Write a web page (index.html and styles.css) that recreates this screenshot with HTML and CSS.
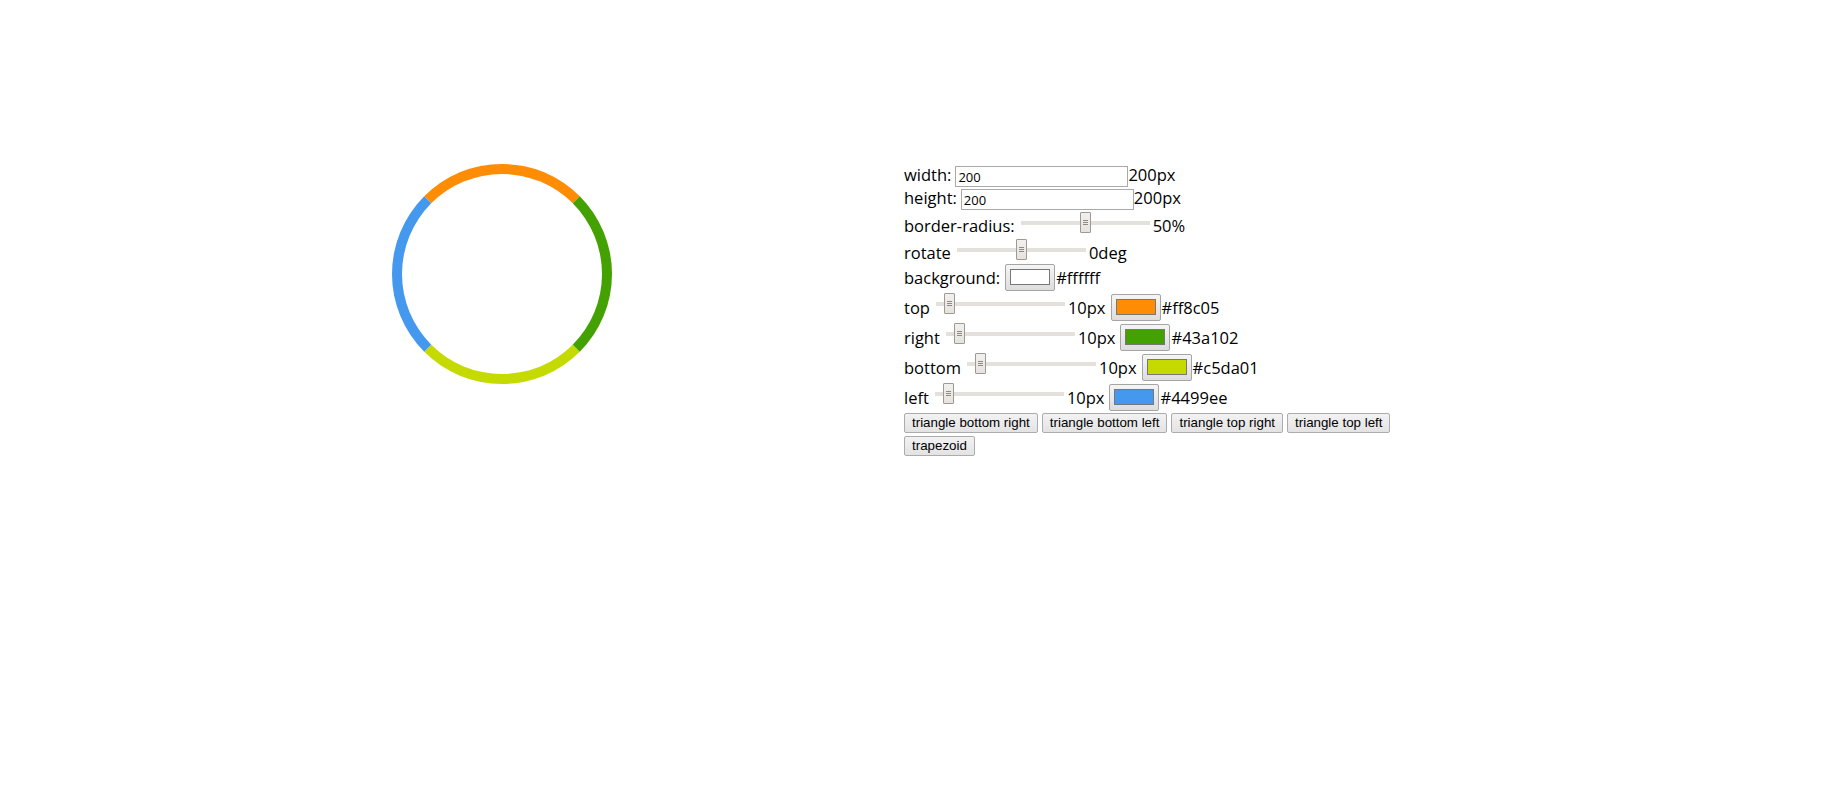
FILE: index.html
```html
<!DOCTYPE html>
<html lang="en">
<head>
<meta charset="utf-8">
<title>Border shape generator</title>
<link rel="stylesheet" href="styles.css">
</head>
<body>
<main class="page">
  <section class="stage">
    <div class="shape"></div>
  </section>
  <form class="controls">
    <div class="row row--text">
      <span class="lbl">width:</span><input class="num" type="text" value="200"><span class="val val--tight">200px</span>
    </div>
    <div class="row row--text">
      <span class="lbl">height:</span><input class="num" type="text" value="200"><span class="val val--tight">200px</span>
    </div>
    <div class="row row--range row--radius">
      <span class="lbl">border-radius:</span><input class="slider" type="range" min="0" max="100" value="50"><span class="val">50%</span>
    </div>
    <div class="row row--range row--rotate">
      <span class="lbl">rotate</span><input class="slider" type="range" min="-180" max="180" value="0"><span class="val">0deg</span>
    </div>
    <div class="row row--color">
      <span class="lbl">background:</span><input class="color" type="color" value="#ffffff"><span class="hex">#ffffff</span>
    </div>
    <div class="row row--color">
      <span class="lbl">top</span><input class="slider" type="range" min="0" max="150" value="10"><span class="val">10px</span><input class="color" type="color" value="#ff8c05"><span class="hex">#ff8c05</span>
    </div>
    <div class="row row--color">
      <span class="lbl">right</span><input class="slider" type="range" min="0" max="150" value="10"><span class="val">10px</span><input class="color" type="color" value="#43a102"><span class="hex">#43a102</span>
    </div>
    <div class="row row--color">
      <span class="lbl">bottom</span><input class="slider" type="range" min="0" max="150" value="10"><span class="val">10px</span><input class="color" type="color" value="#c5da01"><span class="hex">#c5da01</span>
    </div>
    <div class="row row--color row--last">
      <span class="lbl">left</span><input class="slider" type="range" min="0" max="150" value="10"><span class="val">10px</span><input class="color" type="color" value="#4499ee"><span class="hex">#4499ee</span>
    </div>
    <div class="buttons">
      <button type="button" class="btn">triangle bottom right</button>
      <button type="button" class="btn">triangle bottom left</button>
      <button type="button" class="btn">triangle top right</button>
      <button type="button" class="btn">triangle top left</button>
      <button type="button" class="btn">trapezoid</button>
    </div>
  </form>
</main>
</body>
</html>
```

FILE: styles.css
```css
html, body {
  margin: 0;
  background: #ffffff;
}

.page {
  display: flex;
  align-items: flex-start;
  padding-top: 164px;
  font-family: "Open Sans", "Noto Sans", sans-serif;
  font-size: 16.5px;
  color: #000;
}

.stage {
  margin-left: 392px;
}

.shape {
  width: 200px;
  height: 200px;
  border: 10px solid;
  border-color: #ff8c05 #43a102 #c5da01 #4499ee;
  border-radius: 50%;
  background: #ffffff;
}

.controls {
  margin: 2px 0 0 292px;
  width: 500px;
}

.row {
  display: flex;
  align-items: flex-start;
  white-space: nowrap;
}

.row > span {
  line-height: 20px;
}

.row--text { height: 23px; }
.row--text > span { margin-top: -1px; }

.row--radius { height: 27px; }
.row--rotate { height: 25px; }
.row--color { height: 30px; }
.row--last { height: 29px; }

.row--range > span,
.row--color > span { margin-top: 4px; }

.num {
  width: 173px;
  height: 21px;
  box-sizing: border-box;
  margin: 0 0 0 4px;
  padding: 0 2px;
  border: 1px solid #a9a9a9;
  border-radius: 0;
  font-family: "Open Sans", "Noto Sans", sans-serif;
  font-size: 13px;
  color: #000;
  background: #fff;
  outline: none;
}

.val { margin-left: 3px; }
.val--tight { margin-left: 0; }
.hex { margin-left: 1px; }

.slider {
  -webkit-appearance: none;
  appearance: none;
  width: 129px;
  height: 21px;
  margin: 0 0 0 6px;
  padding: 0;
  background: transparent;
}

.row--color .slider { margin-top: -1px; }

.slider::-webkit-slider-runnable-track {
  height: 4px;
  background: #e4e0db;
  border: none;
}

.slider::-webkit-slider-thumb {
  -webkit-appearance: none;
  appearance: none;
  width: 11px;
  height: 21px;
  margin-top: -8.5px;
  box-sizing: border-box;
  border: 1px solid #9e9993;
  border-radius: 1px;
  background:
    linear-gradient(#8e8983, #8e8983) center calc(50% - 2px) / 5px 1px no-repeat,
    linear-gradient(#8e8983, #8e8983) center center / 5px 1px no-repeat,
    linear-gradient(#8e8983, #8e8983) center calc(50% + 2px) / 5px 1px no-repeat,
    linear-gradient(#f2f0ee, #e6e3df);
}

.color {
  -webkit-appearance: none;
  appearance: none;
  width: 50px;
  height: 27px;
  box-sizing: border-box;
  margin: 0 0 0 5px;
  padding: 4px 4px 5px 4px;
  border: 1px solid #a5a5a5;
  border-radius: 2px;
  background: linear-gradient(#f5f5f5, #dddddd);
}

.color::-webkit-color-swatch-wrapper {
  padding: 0;
}

.color::-webkit-color-swatch {
  border: 1px solid #777777;
  border-radius: 0;
}

.buttons {
  display: flex;
  flex-wrap: wrap;
  gap: 3px 4px;
}

.btn {
  height: 20px;
  box-sizing: border-box;
  margin: 0;
  padding: 0 7px;
  border: 1px solid #acacac;
  border-radius: 2px;
  background: linear-gradient(#f2f2f2, #e3e3e3);
  font-family: "Liberation Sans", Arial, sans-serif;
  font-size: 13.333px;
  color: #000;
  line-height: 18px;
}
```
